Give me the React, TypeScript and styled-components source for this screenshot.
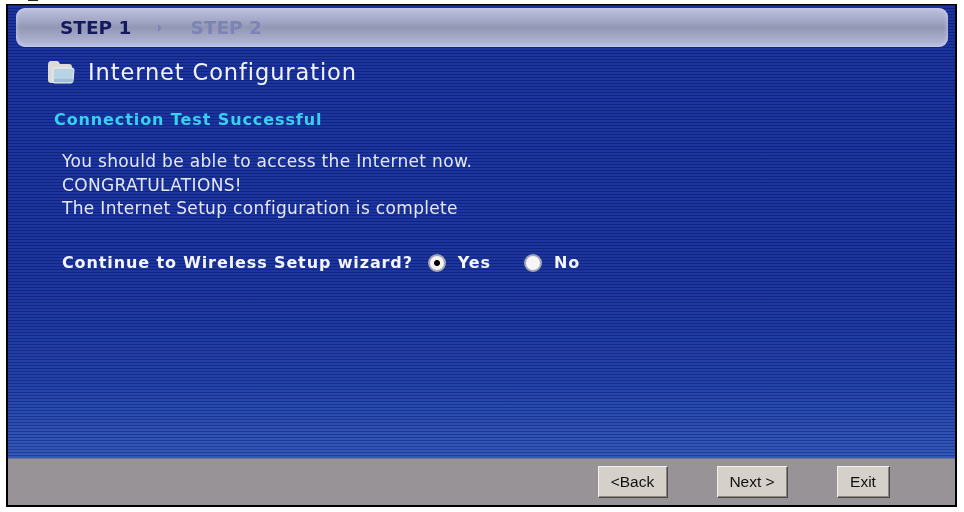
import React from 'react';
import styled, { createGlobalStyle } from 'styled-components';

const GlobalStyle = createGlobalStyle`
  html, body {
    margin: 0;
    padding: 0;
    background: #fff;
    font-family: "DejaVu Sans", Verdana, sans-serif;
  }
`;

const Page = styled.div`
  width: 964px;
  height: 512px;
  box-sizing: border-box;
  padding: 0 7px 5px 6px;
  overflow: hidden;
`;

// bottom of a cropped caption letter above the figure
const CaptionTail = styled.div`
  width: 10px;
  height: 1px;
  margin: 0 0 3px 22px;
  background: #222;
`;

const Frame = styled.div`
  width: 951px;
  height: 503px;
  box-sizing: border-box;
  border: 2px solid #000;
  border-top-width: 1px;
  display: flex;
  flex-direction: column;
  filter: blur(0.4px);
`;

const Main = styled.div`
  flex: 1;
  display: flex;
  flex-direction: column;
  padding: 3px 7px 0 8px;
  background:
    repeating-linear-gradient(
      to bottom,
      rgba(0, 0, 60, 0.28) 0,
      rgba(0, 0, 60, 0.28) 1px,
      rgba(255, 255, 255, 0.02) 1px,
      rgba(255, 255, 255, 0.02) 3px
    ),
    linear-gradient(to bottom, #17309c 0%, #18329c 62%, #2040a8 85%, #3056b8 100%);
`;

const StepBar = styled.div`
  height: 39px;
  flex: none;
  box-sizing: border-box;
  display: flex;
  align-items: center;
  padding: 0 0 0 44px;
  border-radius: 9px;
  background: linear-gradient(to bottom, #bcc0e0 0%, #a9aecd 25%, #9297b4 50%, #a4a9c8 75%, #b6bbe0 100%);
  box-shadow: inset 0 0 5px rgba(215, 220, 245, 0.8);
`;

const Step = styled.span<{ $active?: boolean }>`
  font-family: "DejaVu Sans", sans-serif;
  font-size: 18.5px;
  font-weight: 700;
  color: ${({ $active }) => ($active ? '#15195f' : '#7c84b4')};
`;

const StepArrow = styled.svg`
  margin: 0 26px 0 25px;
`;

const TitleRow = styled.div`
  display: flex;
  align-items: center;
  gap: 13px;
  margin: 13px 0 0 31px;
  height: 24px;
  flex: none;
`;

const Title = styled.h1`
  margin: 0;
  font-size: 22.5px;
  font-weight: 400;
  color: #f2f4fb;
  letter-spacing: 0.9px;
`;

const SectionTitle = styled.div`
  margin: 28px 0 0 38px;
  font-size: 16px;
  line-height: 16px;
  font-weight: 700;
  letter-spacing: 0.9px;
  color: #35d2f0;
`;

const Message = styled.div`
  margin: 22px 0 0 46px;
  font-size: 17px;
  line-height: 23.5px;
  letter-spacing: 0.33px;
  color: #e4e8f6;
`;

const Question = styled.div`
  display: flex;
  align-items: center;
  margin: 32px 0 0 46px;
  font-size: 16px;
  font-weight: 700;
  letter-spacing: 0.88px;
  color: #f4f5fb;
  height: 20px;
  white-space: nowrap;
`;

const Radio = styled.span<{ $checked?: boolean }>`
  flex: none;
  width: 18px;
  height: 18px;
  box-sizing: border-box;
  border-radius: 50%;
  background: radial-gradient(circle, ${({ $checked }) => ($checked ? '#000 0, #000 2.5px, #f3f3f3 3.5px' : '#f6f6f8 0')});
  border: 2px solid #a3a7b4;
  margin: 0 12px 0 15px;
`;

const OptionLabel = styled.span`
  margin-right: 18px;
`;

const Footer = styled.div`
  height: 47px;
  box-sizing: border-box;
  flex: none;
  display: flex;
  align-items: flex-start;
  padding: 7px 0 0 590px;
  background: #979397;
  border-top: 1px solid #6f7590;
`;

const Button = styled.button<{ $w: number; $gap?: number }>`
  width: ${({ $w }) => $w}px;
  height: 31px;
  margin-right: ${({ $gap }) => $gap ?? 0}px;
  padding: 0;
  background: #d5d0c9;
  color: #111;
  font-family: "Liberation Sans", Arial, sans-serif;
  font-size: 15.5px;
  border: none;
  box-shadow: inset 1px 1px 0 #f2f0ec, 1px 1px 0 #4c4a48, inset -1px -1px 0 #8a8682;
`;

const FolderIcon = () => (
  <svg width="28" height="24" viewBox="0 0 28 24">
    <path d="M1 5 Q1 1 4 1 H10 Q12 1 13 4 H22 Q25 4 25 7 V23 H4 Q1 23 1 20 Z" fill="#dedbd6" />
    <path d="M6 10 Q6 8 9 8 H25 Q27 8 27 10 L26 21 Q26 23 24 23 H7 Q6 23 6 21 Z" fill="#b7d3e4" stroke="#eef0f0" strokeWidth="1" />
    <path d="M7 19 H26 V22 H7 Z" fill="#8fb2c8" opacity="0.6" />
  </svg>
);

export default function App() {
  return (
    <>
      <GlobalStyle />
      <Page>
        <CaptionTail />
        <Frame>
          <Main>
            <StepBar>
              <Step $active>STEP 1</Step>
              <StepArrow width="8" height="10" viewBox="0 0 8 10">
                <path d="M2 1 L6 5 L2 9 Z" fill="#7f86b4" />
              </StepArrow>
              <Step>STEP 2</Step>
            </StepBar>
            <TitleRow>
              <FolderIcon />
              <Title>Internet Configuration</Title>
            </TitleRow>
            <SectionTitle>Connection Test Successful</SectionTitle>
            <Message>
              You should be able to access the Internet now.
              <br />
              CONGRATULATIONS!
              <br />
              The Internet Setup configuration is complete
            </Message>
            <Question>
              Continue to Wireless Setup wizard?
              <Radio $checked />
              <OptionLabel>Yes</OptionLabel>
              <Radio />
              <OptionLabel>No</OptionLabel>
            </Question>
          </Main>
          <Footer>
            <Button $w={69} $gap={50}>&lt;Back</Button>
            <Button $w={70} $gap={50}>Next &gt;</Button>
            <Button $w={52}>Exit</Button>
          </Footer>
        </Frame>
      </Page>
    </>
  );
}
